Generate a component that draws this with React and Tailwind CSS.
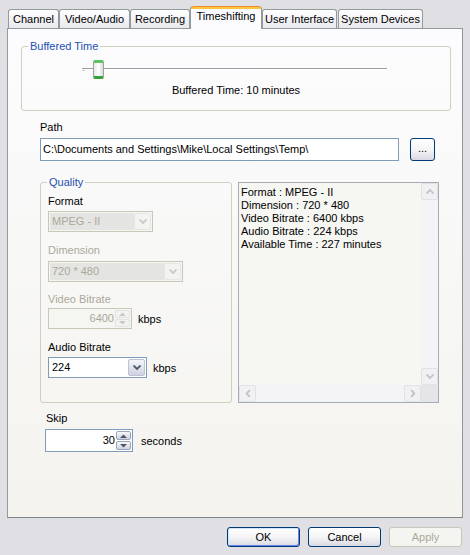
import React from "react";

const tabs = [
  { label: "Channel", w: "w-[51px]" },
  { label: "Video/Audio", w: "w-[71px]" },
  { label: "Recording", w: "w-[60px]" },
  { label: "Timeshifting", w: "w-[72px]", active: true },
  { label: "User Interface", w: "w-[75px]" },
  { label: "System Devices", w: "w-[85px] ml-[1px]" },
];

const info = [
  "Format : MPEG - II",
  "Dimension : 720 * 480",
  "Video Bitrate : 6400 kbps",
  "Audio Bitrate : 224 kbps",
  "Available Time : 227 minutes",
];

function Chevron({ color = "#4d6185", className = "" }) {
  return (
    <svg width="8" height="5" viewBox="0 0 8 5" className={className}>
      <path d="M0.5 0.5 L4 4 L7.5 0.5" fill="none" stroke={color} strokeWidth="1.8" />
    </svg>
  );
}

function SpinArrow({ up, color }) {
  return (
    <svg width="7" height="4" viewBox="0 0 7 4">
      <path d={up ? "M0 4 L3.5 0.5 L7 4 Z" : "M0 0 L3.5 3.5 L7 0 Z"} fill={color} />
    </svg>
  );
}

function XpButton({ children, className = "", disabled, focused }) {
  return (
    <button
      className={`flex items-center justify-center rounded-[3px] border ${
        disabled
          ? "border-[#c9c7ba] bg-[#f4f4f0] text-[#aca899]"
          : "border-[#003c74] bg-gradient-to-b from-white via-[#f5f5f7] to-[#d9d9e3] text-black"
      } ${focused ? "shadow-[inset_1px_1px_0_#cee7ff,inset_-1px_-1px_0_#6982ee]" : ""} ${className}`}
    >
      {children}
    </button>
  );
}

function Combo({ value, width, disabled }) {
  return (
    <div
      className={`flex h-[21px] ${width} items-stretch border p-px ${
        disabled ? "border-[#c9c7ba] bg-[#f5f5f2]" : "border-[#7f9db9] bg-white"
      }`}
    >
      <div
        className={`flex flex-1 items-center pl-[2px] ${
          disabled ? "bg-[#e4e4e2] text-[#aca899]" : "text-black"
        }`}
      >
        {value}
      </div>
      <div
        className={`flex w-[17px] items-center justify-center rounded-[2px] border ${
          disabled
            ? "border-[#e6e6e3] bg-[#f3f3f1]"
            : "border-[#b9c3d3] bg-gradient-to-b from-[#f4f4f8] to-[#cfd3e0]"
        }`}
      >
        <Chevron color={disabled ? "#c9c9c5" : "#4d5566"} />
      </div>
    </div>
  );
}

function Spinner({ value, width, height, disabled }) {
  return (
    <div
      className={`flex ${height} ${width} items-stretch border ${
        disabled ? "border-[#c9c7ba] bg-[#f5f5f2]" : "border-[#7f9db9] bg-white"
      }`}
    >
      <div
        className={`flex flex-1 items-center justify-end pr-[1px] ${
          disabled ? "text-[#aca899]" : "text-black"
        }`}
      >
        {value}
      </div>
      <div className="flex w-[16px] flex-col gap-px py-px pr-px">
        {[true, false].map((up) => (
          <div
            key={String(up)}
            className={`flex flex-1 items-center justify-center rounded-[2px] border ${
              disabled
                ? "border-[#e2e2de] bg-[#f3f3f1]"
                : "border-[#9aa4b6] bg-gradient-to-b from-[#f7f7fa] to-[#cfd3df]"
            }`}
          >
            <SpinArrow up={up} color={disabled ? "#c9c9c5" : "#4d5566"} />
          </div>
        ))}
      </div>
    </div>
  );
}

function ScrollBtn({ dir, className = "" }) {
  const rot = { up: "rotate-180", down: "", left: "rotate-90", right: "-rotate-90" }[dir];
  return (
    <div
      className={`flex h-[17px] w-[17px] items-center justify-center rounded-[2px] border border-[#e2e2e6] bg-[#f1f1f3] ${className}`}
    >
      <Chevron color="#bfc4cc" className={rot} />
    </div>
  );
}

export default function App() {
  return (
    <div className="h-[555px] w-[470px] overflow-hidden bg-[#e0dfe3] pt-[6px] font-['Liberation_Sans',Arial,sans-serif] text-[11px] leading-[13px] text-black">
      {/* tabs */}
      <div className="flex h-[22px] items-end pl-[8px]">
        {tabs.map((t) =>
          t.active ? (
            <div
              key={t.label}
              className={`relative z-10 -mb-px flex h-[23px] ${t.w} flex-col rounded-t-[3px] border-x border-[#919b9c] bg-[#fcfcfe]`}
            >
              <div className="h-[3px] rounded-t-[3px] border-t border-[#e68b2c] bg-[#ffc73c]" />
              <div className="flex flex-1 items-start justify-center pt-[1px]">{t.label}</div>
            </div>
          ) : (
            <div
              key={t.label}
              className={`flex h-[19px] ${t.w} items-center justify-center rounded-t-[3px] border border-b-0 border-[#919b9c] bg-gradient-to-b from-white to-[#e8e8ee] pt-[1px]`}
            >
              {t.label}
            </div>
          )
        )}
      </div>

      {/* tab page */}
      <div className="ml-[7px] h-[490px] w-[456px] border border-[#919b9c] border-r-[#8d9597] border-b-[#7f8587] bg-gradient-to-b from-[#fcfcfe] to-[#f4f3ee]">
        <fieldset className="ml-[13px] mt-[11px] h-[71px] w-[430px] rounded-[3px] border border-[#d0d0bf] px-0">
          <legend className="ml-[6px] px-[2px] text-[#1d4fb0]">Buffered Time</legend>
          <div className="relative ml-[60px] mt-[7px] h-[19px] w-[305px]">
            <div className="absolute left-0 top-[8px] h-[3px] w-[3px] rounded-full border border-[#a7a6aa]" />
            <div className="absolute left-0 right-0 top-[8px] border-t border-b border-t-[#9d9da1] border-b-white" />
            <div className="absolute left-[11px] top-0 h-[19px] w-[11px] rounded-[2px] border border-[#9aa39a] border-t-[3px] border-b-[3px] border-t-[#5cc45e] border-b-[#36a338] bg-gradient-to-r from-[#e8e8e8] via-white to-[#d8d8d8]" />
          </div>
          <div className="mt-[5px] text-center">Buffered Time: 10 minutes</div>
        </fieldset>

        <div className="ml-[32px] mt-[10px]">Path</div>
        <div className="ml-[32px] mt-[4px] flex items-center">
          <div className="flex h-[23px] w-[359px] items-center border border-[#7f9db9] bg-white pl-[2px]">
            C:\Documents and Settings\Mike\Local Settings\Temp\
          </div>
          <XpButton className="ml-[11px] h-[23px] w-[25px] pb-[3px]">...</XpButton>
        </div>

        <div className="ml-[32px] mt-[15px] flex items-start">
          <fieldset className="h-[227px] w-[192px] rounded-[3px] border border-[#d0d0bf] pl-[7px]">
            <legend className="ml-[-1px] px-[2px] text-[#1d4fb0]">Quality</legend>
            <div className="mt-[6px]">Format</div>
            <div className="mt-[3px]">
              <Combo value="MPEG - II" width="w-[105px]" disabled />
            </div>
            <div className="mt-[12px] text-[#aca899]">Dimension</div>
            <div className="mt-[4px]">
              <Combo value="720 * 480" width="w-[135px]" disabled />
            </div>
            <div className="mt-[11px] text-[#aca899]">Video Bitrate</div>
            <div className="mt-[2px] flex items-center">
              <Spinner value="6400" width="w-[84px]" height="h-[21px]" disabled />
              <span className="ml-[6px] pt-[2px]">kbps</span>
            </div>
            <div className="mt-[12px]">Audio Bitrate</div>
            <div className="mt-[3px] flex items-center">
              <Combo value="224" width="w-[99px]" />
              <span className="ml-[6px] pt-[2px]">kbps</span>
            </div>
          </fieldset>

          <div className="ml-[6px] mt-[6px] grid h-[221px] w-[201px] grid-cols-[1fr_17px] grid-rows-[1fr_17px] border border-[#a5acb5] bg-[#f6f6f3]">
            <div className="pl-[2px] pt-[3px]">
              {info.map((l) => (
                <div key={l}>{l}</div>
              ))}
            </div>
            <div className="flex flex-col justify-between bg-[#f4f4f7]">
              <ScrollBtn dir="up" />
              <ScrollBtn dir="down" />
            </div>
            <div className="flex justify-between bg-[#f4f4f7]">
              <ScrollBtn dir="left" />
              <ScrollBtn dir="right" />
            </div>
            <div className="bg-[#e5e4e8]" />
          </div>
        </div>

        <div className="ml-[38px] mt-[9px]">Skip</div>
        <div className="ml-[37px] mt-[4px] flex items-center">
          <Spinner value="30" width="w-[88px]" height="h-[23px]" />
          <span className="ml-[8px] pt-[2px]">seconds</span>
        </div>
      </div>

      {/* dialog buttons */}
      <div className="mt-[9px] flex justify-end gap-[8px] pr-[8px]">
        <XpButton focused className="h-[20px] w-[73px]">OK</XpButton>
        <XpButton className="h-[20px] w-[73px]">Cancel</XpButton>
        <XpButton disabled className="h-[20px] w-[73px]">Apply</XpButton>
      </div>
    </div>
  );
}
